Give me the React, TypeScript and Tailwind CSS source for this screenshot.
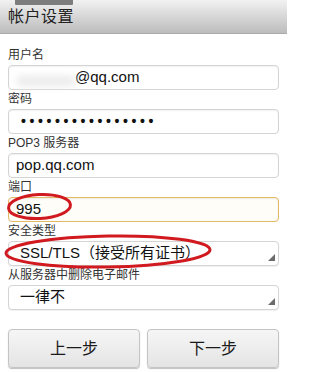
import React from "react";

const font = { fontFamily: '"Liberation Sans", "Noto Sans CJK SC", sans-serif' };

function Label({ children }: { children: React.ReactNode }) {
  return (
    <div className="h-[19px] flex items-end pb-[3px] text-[12px] leading-[13px] text-[#333]">
      {children}
    </div>
  );
}

function Field({ children, focused = false }: { children?: React.ReactNode; focused?: boolean }) {
  return (
    <div
      className={
        "relative h-[25px] rounded-[4px] border flex items-center px-[7px] text-[15px] text-[#111] " +
        (focused
          ? "border-[#e2b965] bg-[#fffdf7] shadow-[inset_0_1px_2px_rgba(0,0,0,0.08)]"
          : "border-[#d4d4d4] bg-white shadow-[inset_0_1px_2px_rgba(0,0,0,0.06)]")
      }
    >
      {children}
    </div>
  );
}

function Select({ children }: { children: React.ReactNode }) {
  return (
    <div className="relative h-[25px] rounded-[4px] border border-[#d4d4d4] bg-white flex items-center pl-[11px] text-[15px] text-[#111] whitespace-nowrap shadow-[0_1px_1px_rgba(0,0,0,0.06)]">
      {children}
      <svg className="absolute right-[3px] bottom-[4px]" width="7" height="7" viewBox="0 0 7 7">
        <polygon points="7,0 7,7 0,7" fill="#6b6b6b" />
      </svg>
    </div>
  );
}

function Btn({ children }: { children: React.ReactNode }) {
  return (
    <div className="flex-1 h-[39px] rounded-[4px] border border-[#c4c4c4] bg-gradient-to-b from-[#f6f6f6] to-[#e4e4e4] shadow-[0_1px_1px_rgba(0,0,0,0.25)] flex items-center justify-center text-[16px] text-[#1a1a1a]">
      {children}
    </div>
  );
}

export default function App() {
  return (
    <div className="relative w-[287px] h-[372px] bg-white overflow-hidden" style={font}>
      <div className="relative h-[34px] bg-gradient-to-b from-[#f2f2f2] to-[#bcbcbc] border-b border-[#aaaaaa] flex items-center px-[8px] pt-[1px]">
        <div className="absolute top-0 left-[15px] w-[58px] h-[5px] bg-[#7d7d7d] rounded-b-[1px]" />
        <span className="text-[16px] text-[#222] tracking-[0.5px]">帐户设置</span>
      </div>

      <div className="px-[8px] pt-[12px] flex flex-col">
        <Label>用户名</Label>
        <Field>
          <div className="w-[59px] h-[12px] mt-[6px] rounded-full bg-[#eeeeee] blur-[3px]" />
          <span>@qq.com</span>
        </Field>
        <Label>密码</Label>
        <Field>
          <span className="text-[14px] tracking-[3.6px] pl-[5px] font-bold">••••••••••••••••</span>
        </Field>
        <Label>POP3 服务器</Label>
        <Field>pop.qq.com</Field>
        <Label>端口</Label>
        <Field focused>995</Field>
        <Label>安全类型</Label>
        <Select>
          <span>SSL/TLS（接受所有证书）</span>
        </Select>
        <Label>从服务器中删除电子邮件</Label>
        <Select>一律不</Select>

        <div className="mt-[19px] flex gap-[7px]">
          <Btn>上一步</Btn>
          <Btn>下一步</Btn>
        </div>
      </div>

      <svg className="absolute left-0 top-0 pointer-events-none" width="287" height="372" viewBox="0 0 287 372">
        <ellipse cx="39.5" cy="206.5" rx="31" ry="12" fill="none" stroke="#d11a1f" strokeWidth="3" transform="rotate(-3 39.5 206.5)" />
        <ellipse cx="108" cy="251.5" rx="102" ry="15.5" fill="none" stroke="#d11a1f" strokeWidth="3" transform="rotate(-1 108 251.5)" />
      </svg>
    </div>
  );
}
